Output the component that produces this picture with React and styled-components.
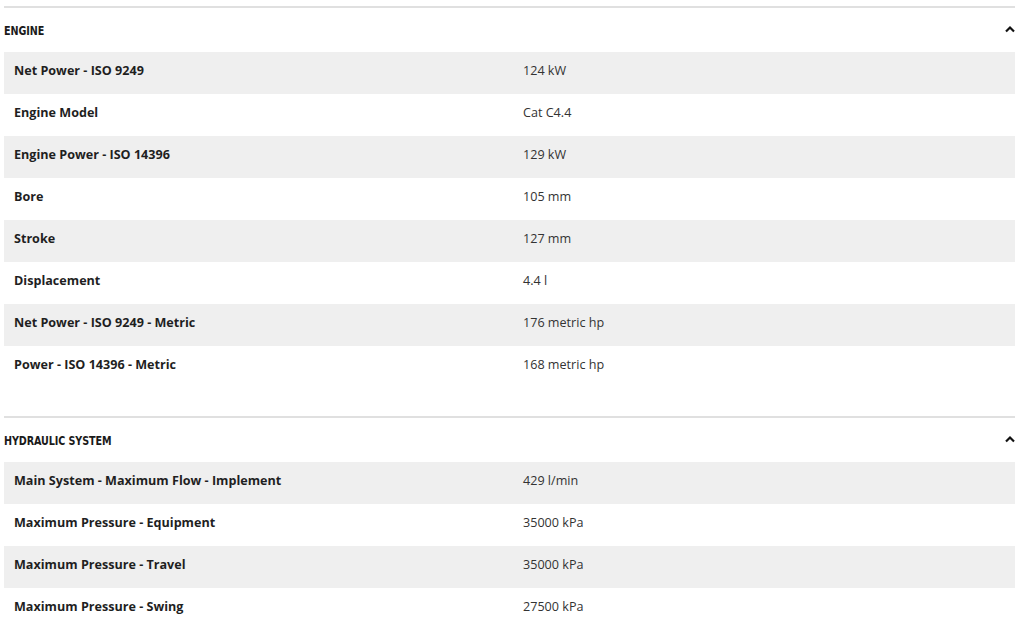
import React from "react";
import styled, { createGlobalStyle } from "styled-components";

const Global = createGlobalStyle`
  html, body { margin: 0; padding: 0; background: #fff; }
  body { font-family: "Open Sans", "Liberation Sans", sans-serif; }
`;

const Page = styled.div`
  padding: 6px 9px 0 4px;
  display: flex;
  flex-direction: column;
  gap: 28px;
`;

const Section = styled.section`
  border-top: 2px solid #e0e0e0;
  display: flex;
  flex-direction: column;
`;

const Header = styled.div`
  height: 44px;
  display: flex;
  align-items: center;
  justify-content: space-between;
`;

const Title = styled.h3`
  margin: 0;
  font-family: "DejaVu Sans Condensed", "DejaVu Sans", sans-serif;
  font-weight: 700;
  font-size: 12px;
  letter-spacing: -0.1px;
  color: #1a1a1a;
  text-transform: uppercase;
  padding-top: 2px;
  transform: scaleX(0.89);
  transform-origin: left center;
`;

const ChevronSvg = styled.svg`
  margin-bottom: 3px;
`;

const Rows = styled.div`
  display: flex;
  flex-direction: column;
`;

const Row = styled.div`
  display: grid;
  grid-template-columns: 509px 1fr;
  height: 42px;
  box-sizing: border-box;
  padding-bottom: 5px;
  align-items: center;
  background: ${(p) => (p.$shaded ? "#efefef" : "#fff")};
  font-size: 12.6px;
`;

const Label = styled.div`
  padding-left: 10px;
  font-weight: 700;
  color: #1f1f1f;
`;

const Value = styled.div`
  padding-left: 10px;
  color: #333;
`;

const Chevron = () => (
  <ChevronSvg width="12" height="8" viewBox="0 0 12 8">
    <polyline points="3,6.5 7,2.5 11,6.5" fill="none" stroke="#111" strokeWidth="2.2" />
  </ChevronSvg>
);

const sections = [
  {
    title: "Engine",
    rows: [
      ["Net Power - ISO 9249", "124 kW"],
      ["Engine Model", "Cat C4.4"],
      ["Engine Power - ISO 14396", "129 kW"],
      ["Bore", "105 mm"],
      ["Stroke", "127 mm"],
      ["Displacement", "4.4 l"],
      ["Net Power - ISO 9249 - Metric", "176 metric hp"],
      ["Power - ISO 14396 - Metric", "168 metric hp"],
    ],
  },
  {
    title: "Hydraulic System",
    rows: [
      ["Main System - Maximum Flow - Implement", "429 l/min"],
      ["Maximum Pressure - Equipment", "35000 kPa"],
      ["Maximum Pressure - Travel", "35000 kPa"],
      ["Maximum Pressure - Swing", "27500 kPa"],
    ],
  },
];

export default function App() {
  return (
    <>
      <Global />
      <Page>
        {sections.map((s) => (
          <Section key={s.title}>
            <Header>
              <Title>{s.title}</Title>
              <Chevron />
            </Header>
            <Rows>
              {s.rows.map(([l, v], i) => (
                <Row key={l} $shaded={i % 2 === 0}>
                  <Label>{l}</Label>
                  <Value>{v}</Value>
                </Row>
              ))}
            </Rows>
          </Section>
        ))}
      </Page>
    </>
  );
}
